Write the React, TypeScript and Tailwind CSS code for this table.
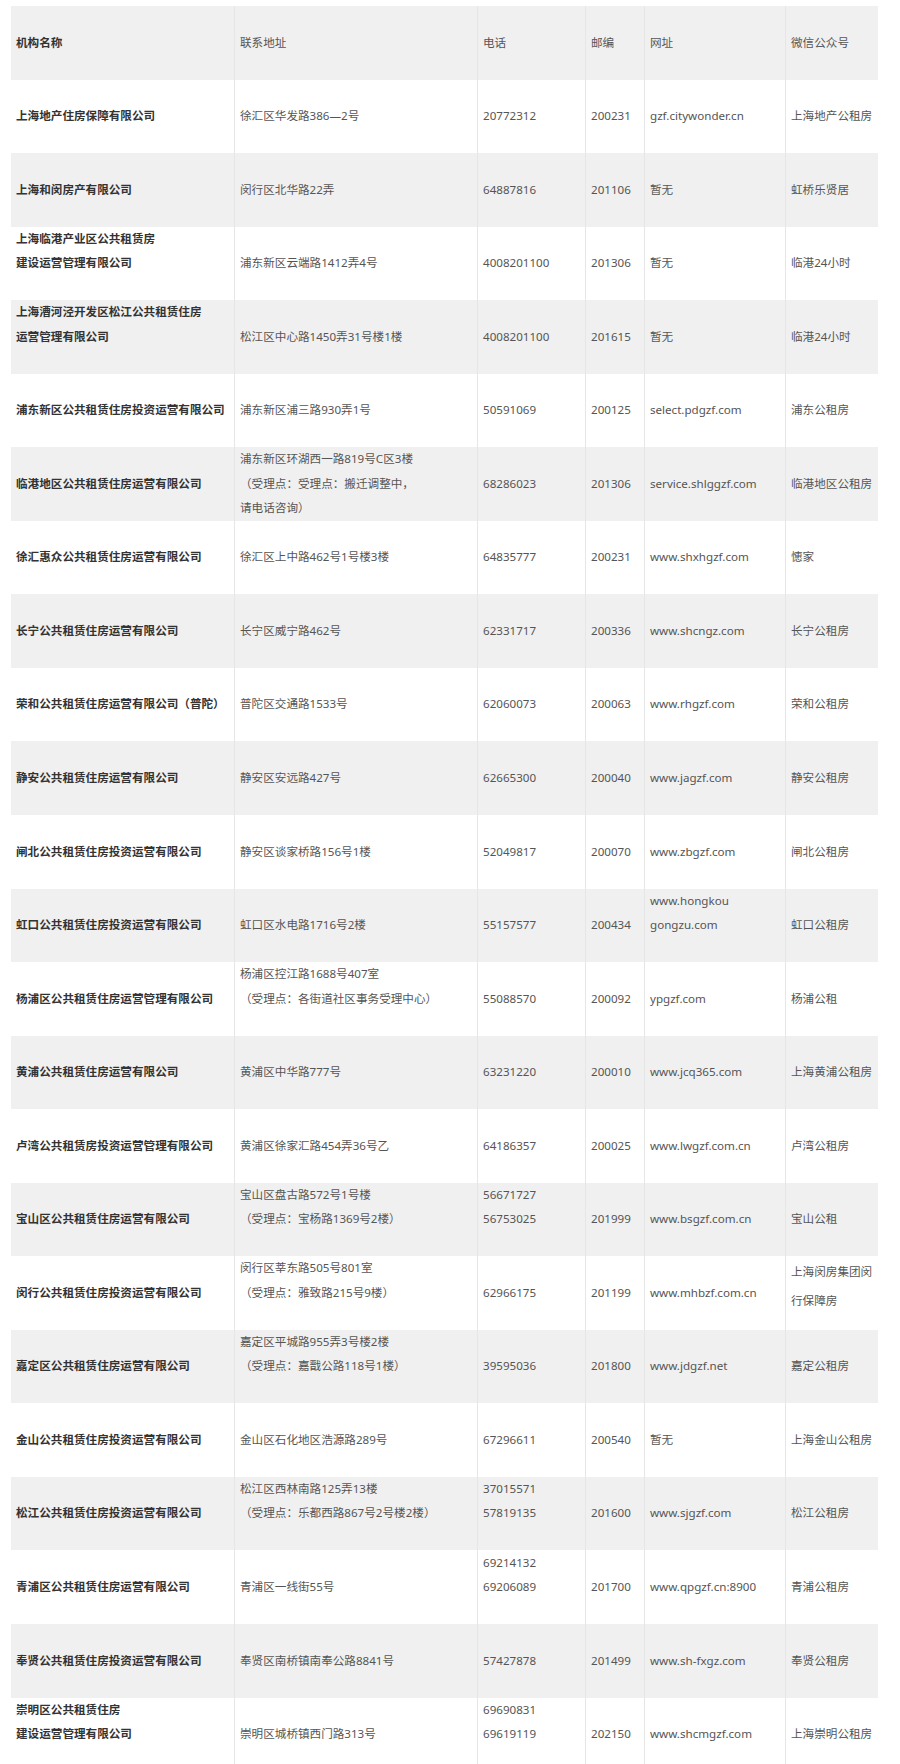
import React from "react";

type Cell = string | string[];

const header = ["机构名称", "联系地址", "电话", "邮编", "网址", "微信公众号"];

const rows: Cell[][] = [
  ["上海地产住房保障有限公司", "徐汇区华发路386—2号", "20772312", "200231", "gzf.citywonder.cn", "上海地产公租房"],
  ["上海和闵房产有限公司", "闵行区北华路22弄", "64887816", "201106", "暂无", "虹桥乐贤居"],
  [["上海临港产业区公共租赁房", "建设运营管理有限公司"], "浦东新区云端路1412弄4号", "4008201100", "201306", "暂无", "临港24小时"],
  [["上海漕河泾开发区松江公共租赁住房", "运营管理有限公司"], "松江区中心路1450弄31号楼1楼", "4008201100", "201615", "暂无", "临港24小时"],
  ["浦东新区公共租赁住房投资运营有限公司", "浦东新区浦三路930弄1号", "50591069", "200125", "select.pdgzf.com", "浦东公租房"],
  ["临港地区公共租赁住房运营有限公司", ["浦东新区环湖西一路819号C区3楼", "（受理点：受理点：搬迁调整中，", "请电话咨询）"], "68286023", "201306", "service.shlggzf.com", "临港地区公租房"],
  ["徐汇惠众公共租赁住房运营有限公司", "徐汇区上中路462号1号楼3楼", "64835777", "200231", "www.shxhgzf.com", "憓家"],
  ["长宁公共租赁住房运营有限公司", "长宁区威宁路462号", "62331717", "200336", "www.shcngz.com", "长宁公租房"],
  ["荣和公共租赁住房运营有限公司（普陀）", "普陀区交通路1533号", "62060073", "200063", "www.rhgzf.com", "荣和公租房"],
  ["静安公共租赁住房运营有限公司", "静安区安远路427号", "62665300", "200040", "www.jagzf.com", "静安公租房"],
  ["闸北公共租赁住房投资运营有限公司", "静安区谈家桥路156号1楼", "52049817", "200070", "www.zbgzf.com", "闸北公租房"],
  ["虹口公共租赁住房投资运营有限公司", "虹口区水电路1716号2楼", "55157577", "200434", ["www.hongkou", "gongzu.com"], "虹口公租房"],
  ["杨浦区公共租赁住房运营管理有限公司", ["杨浦区控江路1688号407室", "（受理点：各街道社区事务受理中心）"], "55088570", "200092", "ypgzf.com", "杨浦公租"],
  ["黄浦公共租赁住房运营有限公司", "黄浦区中华路777号", "63231220", "200010", "www.jcq365.com", "上海黄浦公租房"],
  ["卢湾公共租赁房投资运营管理有限公司", "黄浦区徐家汇路454弄36号乙", "64186357", "200025", "www.lwgzf.com.cn", "卢湾公租房"],
  ["宝山区公共租赁住房运营有限公司", ["宝山区盘古路572号1号楼", "（受理点：宝杨路1369号2楼）"], ["56671727", "56753025"], "201999", "www.bsgzf.com.cn", "宝山公租"],
  ["闵行公共租赁住房投资运营有限公司", ["闵行区莘东路505号801室", "（受理点：雅致路215号9楼）"], "62966175", "201199", "www.mhbzf.com.cn", "上海闵房集团闵行保障房"],
  ["嘉定区公共租赁住房运营有限公司", ["嘉定区平城路955弄3号楼2楼", "（受理点：嘉戬公路118号1楼）"], "39595036", "201800", "www.jdgzf.net", "嘉定公租房"],
  ["金山公共租赁住房投资运营有限公司", "金山区石化地区浩源路289号", "67296611", "200540", "暂无", "上海金山公租房"],
  ["松江公共租赁住房投资运营有限公司", ["松江区西林南路125弄13楼", "（受理点：乐都西路867号2号楼2楼）"], ["37015571", "57819135"], "201600", "www.sjgzf.com", "松江公租房"],
  ["青浦区公共租赁住房运营有限公司", "青浦区一线街55号", ["69214132", "69206089"], "201700", "www.qpgzf.cn:8900", "青浦公租房"],
  ["奉贤公共租赁住房投资运营有限公司", "奉贤区南桥镇南奉公路8841号", "57427878", "201499", "www.sh-fxgz.com", "奉贤公租房"],
  [["崇明区公共租赁住房", "建设运营管理有限公司"], "崇明区城桥镇西门路313号", ["69690831", "69619119"], "202150", "www.shcmgzf.com", "上海崇明公租房"],
];

function CellContent({ value }: { value: Cell }) {
  if (typeof value === "string") {
    // this one wraps inside the narrow wechat column
    if (value === "上海闵房集团闵行保障房") {
      return (
        <div className="leading-[29px] pb-[14px] whitespace-nowrap">
          <div>上海闵房集团闵</div>
          <div>行保障房</div>
        </div>
      );
    }
    return <div className="whitespace-nowrap">{value}</div>;
  }
  // two explicit lines keep an empty third line below them
  return (
    <div className={value.length === 2 ? "pb-[24.5px]" : ""}>
      {value.map((line, i) => (
        <div key={i} className="whitespace-nowrap">{line}</div>
      ))}
    </div>
  );
}

function Row({ cells, shaded }: { cells: Cell[]; shaded: boolean }) {
  return (
    <div
      className={`grid grid-cols-[223px_243px_108px_59px_141px_93px] h-[73.55px] ${shaded ? "bg-[#f0f0f0]" : "bg-white"}`}
    >
      {cells.map((c, i) => (
        <div
          key={i}
          className={`flex items-center pl-[5px] min-w-0 ${i > 0 ? "border-l border-[#e6e6e6] text-[#555]" : "font-bold text-[#333]"}`}
        >
          <CellContent value={c} />
        </div>
      ))}
    </div>
  );
}

export default function App() {
  return (
    <div
      className="min-h-screen bg-white pt-[6px] pl-[11px] text-[11.6px] leading-[24.5px]"
      style={{ fontFamily: '"Noto Sans", "Noto Sans CJK SC", sans-serif' }}
    >
      <div className="w-[867px]">
        <Row cells={header} shaded />
        {rows.map((r, i) => (
          <Row key={i} cells={r} shaded={i % 2 === 1} />
        ))}
      </div>
    </div>
  );
}
